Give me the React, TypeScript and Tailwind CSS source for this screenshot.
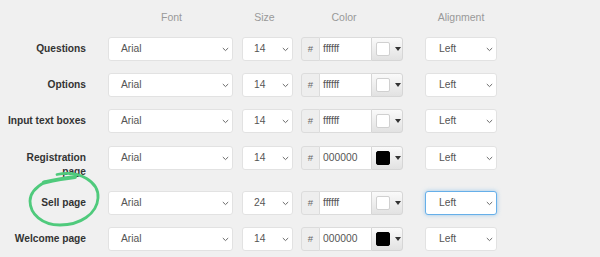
import React from "react";

type Row = {
  label: string;
  size: string;
  color: string;
  focused?: boolean;
  extraTop?: boolean;
};

const rows: Row[] = [
  { label: "Questions", size: "14", color: "ffffff" },
  { label: "Options", size: "14", color: "ffffff" },
  { label: "Input text boxes", size: "14", color: "ffffff" },
  { label: "Registration page", size: "14", color: "000000", extraTop: true },
  { label: "Sell page", size: "24", color: "ffffff", focused: true },
  { label: "Welcome page", size: "14", color: "000000" },
];

function Chevron() {
  return (
    <svg width="7" height="5" viewBox="0 0 7 5" className="shrink-0">
      <path d="M0.8 1 L3.5 3.6 L6.2 1" fill="none" stroke="#6b6b6b" strokeWidth="1" />
    </svg>
  );
}

function Select({
  value,
  width,
  pl,
  focused,
}: {
  value: string;
  width: string;
  pl: string;
  focused?: boolean;
}) {
  return (
    <div
      className={`${width} ${pl} h-[24px] flex items-center justify-between pr-[3px] bg-white rounded-[3px] border text-[10.3px] text-[#555] ${
        focused
          ? "border-[#66afe9] shadow-[0_0_4px_rgba(102,175,233,0.6)]"
          : "border-[#e2e2e2]"
      }`}
    >
      <span>{value}</span>
      <Chevron />
    </div>
  );
}

function ColorPicker({ value }: { value: string }) {
  const black = value === "000000";
  return (
    <div className="flex w-[102px] h-[24px] text-[10.3px] text-[#555]">
      <div className="w-[19px] flex items-center justify-center bg-[#eeeeee] border border-[#dcdcdc] rounded-l-[3px] text-[9.5px] text-[#666]">
        #
      </div>
      <div className="w-[51px] flex items-center pl-[3px] bg-white border-y border-[#dcdcdc]">
        {value}
      </div>
      <div className="w-[32px] flex items-center pl-[4px] border border-[#d6d6d6] rounded-r-[3px] bg-gradient-to-b from-[#fafafa] to-[#e2e2e2]">
        <div
          className={`w-[14px] h-[14px] rounded-[2px] border ${
            black ? "bg-black border-black" : "bg-white border-[#d0d0d0]"
          }`}
        />
        <div className="ml-[5px] w-0 h-0 border-l-[3px] border-r-[3px] border-t-[4px] border-l-transparent border-r-transparent border-t-[#333]" />
      </div>
    </div>
  );
}

export default function App() {
  return (
    <div className="relative w-[600px] h-[257px] overflow-hidden bg-[#f0f0f0] font-['Liberation_Sans',Arial,sans-serif]">
      <div className="flex items-center h-[24px] mt-[6px] text-[10.5px] text-[#999]">
        <div className="w-[108px]" />
        <div className="w-[125px] text-center pl-[2px]">Font</div>
        <div className="ml-[9px] w-[51px] text-center pr-[6px]">Size</div>
        <div className="ml-[8px] w-[102px] text-center pr-[16px]">Color</div>
        <div className="ml-[22px] w-[72px] text-center">Alignment</div>
      </div>
      <div className="flex flex-col gap-[12px] mt-[7px]">
        {rows.map((r) => (
          <div key={r.label} className={`flex items-start ${r.extraTop ? "mt-[1px]" : ""}`}>
            <div className="w-[86px] text-right font-bold text-[10.2px] leading-[14px] pt-[5px] text-[#333]">
              {r.label === "Registration page" ? (
                <>
                  Registration
                  <br />
                  page
                </>
              ) : (
                r.label
              )}
            </div>
            <div className="ml-[22px]">
              <Select value="Arial" width="w-[125px]" pl="pl-[12px]" />
            </div>
            <div className="ml-[9px]">
              <Select value={r.size} width="w-[51px]" pl="pl-[11px]" />
            </div>
            <div className="ml-[8px]">
              <ColorPicker value={r.color} />
            </div>
            <div className="ml-[22px]">
              <Select value="Left" width="w-[72px]" pl="pl-[13px]" focused={r.focused} />
            </div>
          </div>
        ))}
      </div>
      <svg
        className="absolute inset-0 pointer-events-none"
        width="600"
        height="257"
        viewBox="0 0 600 257"
      >
        <path
          d="M44 182.5 C 55 180, 66 178, 75 177"
          fill="none"
          stroke="#4fca7c"
          strokeWidth="4"
          strokeLinecap="round"
        />
        <path
          d="M57 174.5 C 80 170, 99 182, 98 198 C 97 214, 80 225, 60 225 C 42 225, 30 214, 30 201 C 30 193, 36 187, 45 182"
          fill="none"
          stroke="#4fca7c"
          strokeWidth="2.8"
          strokeLinecap="round"
        />
      </svg>
    </div>
  );
}
